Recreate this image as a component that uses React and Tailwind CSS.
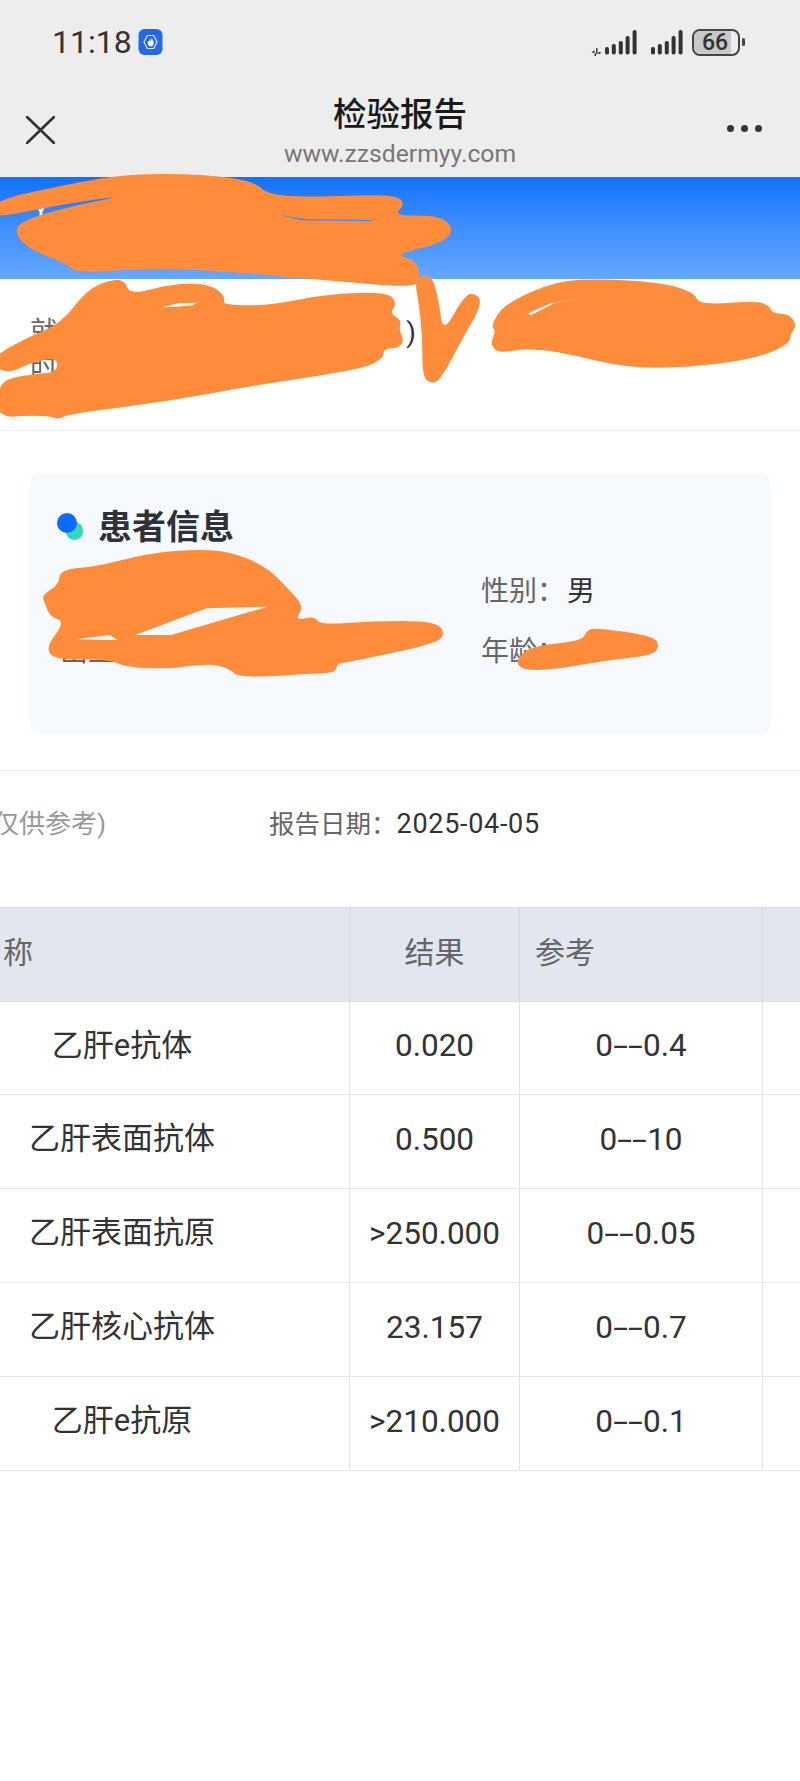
import React from 'react';

const rows = [
  { name: '乙肝e抗体', result: '0.020', low: '0', high: '0.4', height: 'h-[93px]' },
  { name: '乙肝表面抗体', result: '0.500', low: '0', high: '10', height: 'h-[94px]' },
  { name: '乙肝表面抗原', result: '>250.000', low: '0', high: '0.05', height: 'h-[94px]' },
  { name: '乙肝核心抗体', result: '23.157', low: '0', high: '0.7', height: 'h-[94px]' },
  { name: '乙肝e抗原', result: '>210.000', low: '0', high: '0.1', height: 'h-[94px]' },
];

// closed blob through the midpoints of the given points
function blob(points) {
  const mid = (a, b) => [(a[0] + b[0]) / 2, (a[1] + b[1]) / 2];
  const start = mid(points[points.length - 1], points[0]);
  let d = `M${start[0]} ${start[1]}`;
  points.forEach((p, i) => {
    const m = mid(p, points[(i + 1) % points.length]);
    d += ` Q${p[0]} ${p[1]} ${m[0]} ${m[1]}`;
  });
  return d + ' Z';
}

const orange = '#ff8c3b';

function Scribbles() {
  return (
    <svg className="absolute left-0 top-0 pointer-events-none" width="800" height="800" viewBox="0 0 800 800">
      <g transform="scale(0.5102 0.3333)">
        <path fill={orange} d={blob([[-10, 600], [150, 548], [250, 522], [400, 522], [500, 545], [522, 582], [600, 592], [770, 582], [796, 610], [770, 648], [860, 645], [890, 685], [870, 728], [770, 765], [815, 778], [824, 832], [812, 864], [650, 842], [450, 815], [300, 803], [150, 820], [130, 790], [60, 750], [28, 700], [40, 665], [120, 625], [250, 585], [130, 610], [5, 650], [-10, 640]])} />
        <path fill="#3f8dfd" d="M548 645 L600 657 L722 660 L740 657 L722 664 L590 661 Z" />
      </g>
      <g transform="translate(0 270) scale(0.5102 0.3333)">
        <path fill={orange} d={blob([[-15, 262], [50, 205], [120, 160], [170, 60], [215, 30], [245, 30], [254, 75], [340, 40], [412, 42], [442, 80], [436, 106], [530, 106], [640, 72], [760, 66], [778, 100], [764, 130], [787, 150], [782, 180], [792, 210], [782, 234], [752, 235], [752, 265], [710, 297], [500, 346], [320, 396], [135, 432], [115, 448], [95, 437], [40, 437], [15, 442], [-8, 420], [-5, 370], [10, 325], [70, 312], [112, 306], [112, 262], [60, 278], [22, 308], [-10, 295]])} />
        <path fill={orange} d={blob([[812, 30], [845, 10], [860, 90], [868, 190], [905, 90], [925, 64], [948, 95], [905, 210], [865, 325], [847, 342], [828, 322], [828, 200], [820, 90]])} />
        <path fill="#ffffff" d="M318 112 L350 100 L385 98 L378 106 L345 110 Z" />
        <path fill={orange} d={blob([[962, 165], [990, 100], [1090, 33], [1180, 26], [1300, 38], [1362, 68], [1370, 105], [1480, 93], [1507, 105], [1514, 130], [1547, 132], [1562, 165], [1550, 190], [1547, 222], [1480, 267], [1350, 292], [1230, 294], [1100, 247], [1030, 235], [980, 250], [960, 225], [972, 185]])} />
        <path fill="#ffffff" d="M1035 130 L1080 100 L1150 85 L1090 97 L1040 136 Z" />
      </g>
      <g transform="translate(0 500) scale(0.5102 0.3333)">
        <path fill={orange} d={blob([[82, 285], [115, 255], [118, 208], [190, 200], [280, 163], [370, 148], [450, 153], [522, 200], [567, 270], [596, 320], [577, 362], [617, 348], [627, 375], [730, 363], [852, 363], [874, 400], [852, 432], [680, 487], [662, 490], [657, 517], [630, 520], [470, 534], [448, 505], [410, 490], [330, 507], [250, 502], [210, 477], [110, 480], [88, 445], [128, 365], [98, 350], [88, 310]])} />
        <path fill="#f6faff" d="M265 405 L405 325 L525 320 L480 340 L335 405 Z" />
        <path fill="#f6faff" d="M150 418 L215 405 L230 420 Z" />
        <path fill={orange} d={blob([[1010, 482], [1040, 438], [1140, 423], [1150, 393], [1165, 383], [1282, 408], [1293, 440], [1277, 467], [1180, 482], [1100, 507], [1025, 512]])} />
      </g>
    </svg>
  );
}

function Signal() {
  const bars = [[0, 46], [6.8, 43], [13.8, 40], [20.6, 35], [27.6, 29]];
  return (
    <svg width="34" height="30" viewBox="0 26 34 30">
      {bars.map(([x, top]) => (
        <rect key={x} x={x + 1} y={top} width="4" height={53.5 - top} rx="1.8" fill="#333" />
      ))}
    </svg>
  );
}

function StatusBar() {
  return (
    <div className="h-[84px] flex items-center pl-[52px] text-[#333]">
      <span className="text-[32px] leading-none">11:18</span>
      <svg className="ml-[6px]" width="25" height="26" viewBox="0 0 24 26">
        <rect width="24" height="26" rx="6" fill="#2368ea" />
        <path d="M5.5 13 L8.8 6.5 H15.2 L18.5 13 L15.2 19.5 H8.8 Z" fill="none" stroke="#dfeaff" strokeWidth="1.2" />
        <path d="M9.2 12 V14.5 Q10 17.5 12.3 17.5 Q14.6 17.5 15 14.5 L15.6 12 L14.4 12.8 V9.3 L13.5 12 V8.4 L12.5 12 L11.8 8.8 V12.6 L10.6 10 L10.6 13 Z" fill="#ffffff" />
      </svg>
      <div className="ml-auto mr-[55px] flex items-center">
        <svg width="11" height="8" viewBox="0 0 10 8" className="mt-[20px]">
          <path d="M0 4.5 L3 2 V8 H4.6 V0 H6 V5 L8 4 L9.8 4.5 L8 6 L6 5.5" fill="#333" />
        </svg>
        <div className="mr-[12px] ml-[2px]">
          <Signal />
        </div>
        <Signal />
        <div className="ml-[8px] relative w-[48px] h-[27px] rounded-[8px] border-[2px] border-[#444] overflow-hidden">
          <div className="h-full w-[37px] bg-[#c9c9c9]" />
          <span className="absolute inset-0 pr-[2px] flex items-center justify-center text-[23px] leading-none font-medium text-[#333]">66</span>
        </div>
        <div className="ml-[2px] w-[3px] h-[8px] rounded-full bg-[#444]" />
      </div>
    </div>
  );
}

function NavBar() {
  return (
    <div className="h-[93px] flex justify-between px-[26px]">
      <div className="w-[48px]">
        <svg className="mt-[32px]" width="29" height="28" viewBox="0 0 29 28">
          <path d="M1 1 L28 27 M28 1 L1 27" stroke="#333" strokeWidth="2.6" strokeLinecap="round" />
        </svg>
      </div>
      <div className="flex flex-col items-center">
        <div className="text-[33.5px] leading-[40px] mt-[11px] font-medium text-[#1a1a1a]">检验报告</div>
        <div className="text-[24.7px] leading-[30px] mt-[4px] text-[#777]">www.zzsdermyy.com</div>
      </div>
      <div className="w-[48px] mt-[41px] flex justify-end gap-[7px] pr-[12px]">
        <span className="w-[7px] h-[7px] rounded-full bg-[#333]" />
        <span className="w-[7px] h-[7px] rounded-full bg-[#333]" />
        <span className="w-[7px] h-[7px] rounded-full bg-[#333]" />
      </div>
    </div>
  );
}

function PatientCard() {
  return (
    <div className="mt-[43px] mx-[29px] h-[260px] rounded-[10px] bg-[#f6faff] pt-[31px] pl-[28px]">
      <div className="flex items-center h-[44px]">
        <span className="relative w-[26px] h-[28px]">
          <span className="absolute left-[9px] top-[9px] w-[17px] h-[18px] rounded-full bg-[#2fd8b6]" />
          <span className="absolute left-0 top-0 w-[20px] h-[20px] rounded-full bg-[#0a6cff]" />
        </span>
        <span className="ml-[15px] text-[34px] leading-none font-bold text-[#2d3138]">患者信息</span>
      </div>
      <div className="mt-[23px] grid grid-cols-[424px_1fr] gap-y-[20px] text-[28px] leading-[40px] text-[#666]">
        <span className="pl-[3px]">姓名</span>
        <span>性别：<span className="ml-[2px] text-[#333]">男</span></span>
        <span className="pl-[3px]">出生日期</span>
        <span>年龄：</span>
      </div>
    </div>
  );
}

function ReportTable() {
  return (
    <div className="mt-[61px] overflow-hidden text-[#666]">
      <div className="flex w-[904px] -ml-[104px] h-[95px] bg-[#e2e6ee] border-y border-[#dfe1e6] text-[30px]">
        <div className="w-[454px] shrink-0 flex items-center pl-[17px] pb-[4px] border-r border-[#d8dae0]">项目名称</div>
        <div className="w-[170px] shrink-0 flex items-center justify-center pb-[4px] border-r border-[#d8dae0]">结果</div>
        <div className="w-[243px] shrink-0 flex items-center pl-[15px] pb-[4px] border-r border-[#d8dae0]">参考</div>
      </div>
      {rows.map((row) => (
        <div key={row.name} className={`flex w-[904px] -ml-[104px] ${row.height} border-b border-[#e6e7ea] text-[#333]`}>
          <div className="w-[452px] shrink-0 mr-[2px] flex items-center justify-center text-[31px] pb-[4px] relative after:absolute after:right-[-2px] after:inset-y-0 after:w-px after:bg-[#e3e4e8]">{row.name}</div>
          <div className="w-[170px] shrink-0 flex items-center justify-center text-[31.5px] pb-[4px] border-r border-[#e3e4e8]">{row.result}</div>
          <div className="w-[243px] shrink-0 flex items-center justify-center text-[31.5px] pb-[4px] border-r border-[#e3e4e8]">
            {row.low}
            <span className="inline-block w-[30px] text-center scale-x-[1.7]">--</span>
            {row.high}
          </div>
        </div>
      ))}
    </div>
  );
}

export default function App() {
  return (
    <div className="relative w-[800px] h-[1781px] overflow-hidden bg-white font-['Roboto','Noto_Sans_CJK_SC',sans-serif]">
      <div className="h-[177px] bg-[#ededed]">
        <StatusBar />
        <NavBar />
      </div>
      <div className="h-[102px] pt-[18px] pl-[33px] text-[26px] leading-[30px] text-white bg-gradient-to-b from-[#0d72ff] to-[#64a8ff]">Y</div>
      <div className="h-[152px] border-b border-[#eeeeee] pt-[34px] text-[28px] leading-[40px] text-[#666]">
        <div className="flex justify-between w-[386px] ml-[30px]">
          <span>就诊</span>
          <span className="text-[#333]">)</span>
        </div>
        <div className="ml-[30px] mt-[-6px]">时间</div>
      </div>
      <PatientCard />
      <div className="mt-[36px] border-t border-[#ececec] h-[76px] pt-[33px] flex text-[25.5px] leading-[40px] whitespace-nowrap">
        <div className="w-[106px] shrink-0 overflow-hidden flex justify-end text-[26px] text-[#999]">(仅供参考)</div>
        <div className="ml-[163px] text-[#666]">报告日期：<span className="text-[#333] text-[27px] tracking-[0.7px]">2025-04-05</span></div>
      </div>
      <ReportTable />
      <Scribbles />
    </div>
  );
}
